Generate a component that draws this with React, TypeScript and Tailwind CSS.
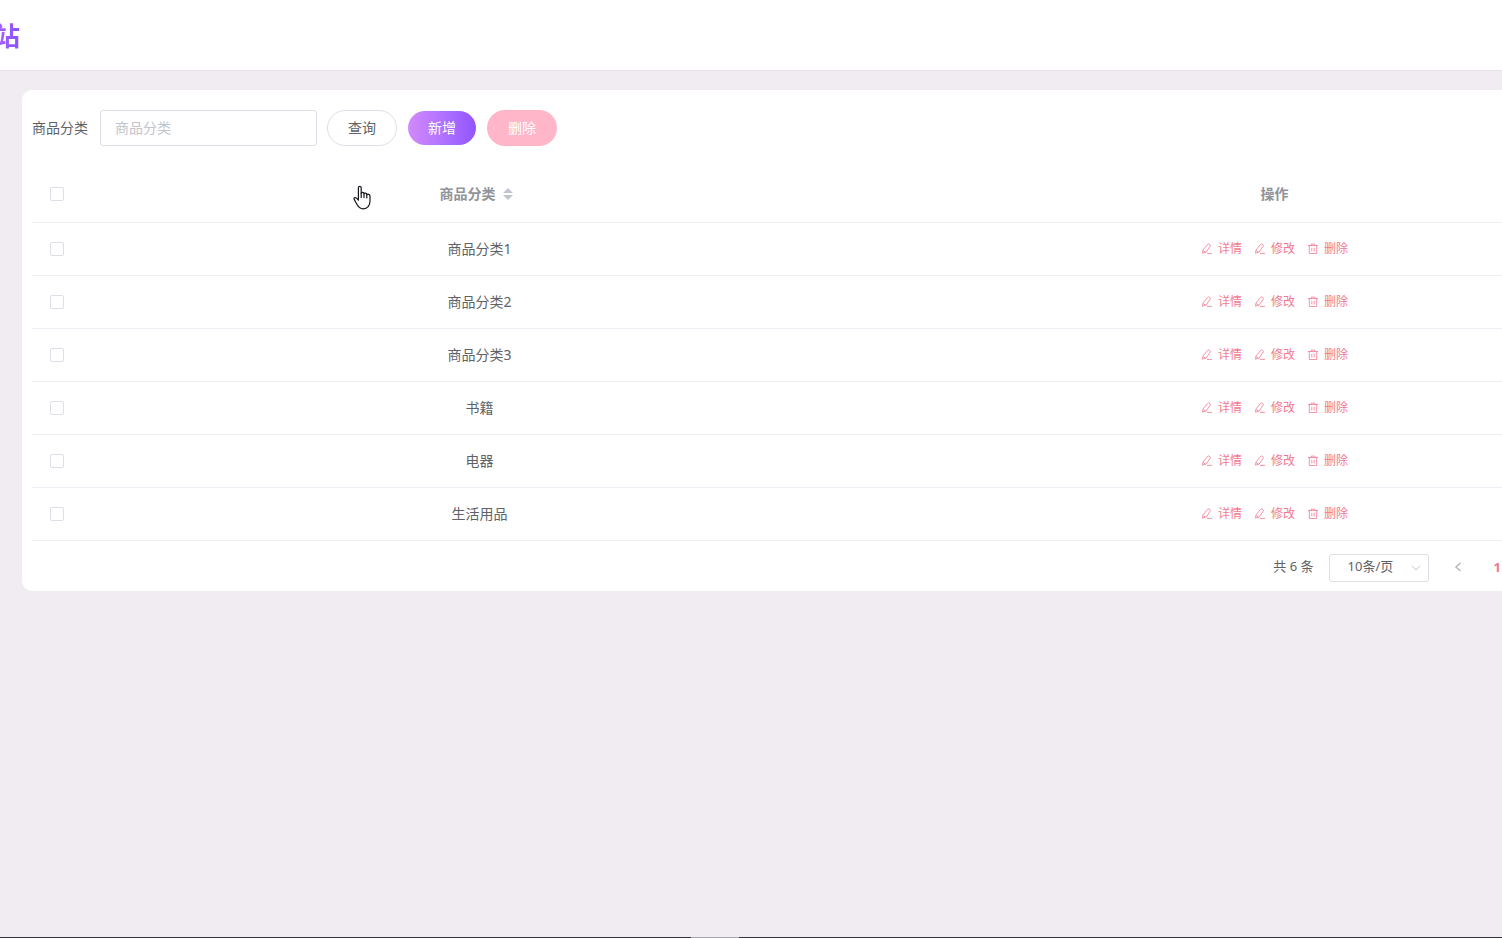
const rows = ['商品分类1', '商品分类2', '商品分类3', '书籍', '电器', '生活用品'];

const checkboxClass =
  'block size-[14px] mx-auto appearance-none rounded-[2px] border border-[#dcdfe6] bg-white checked:bg-[#f78ca0]';

function EditIcon() {
  return (
    <svg viewBox="0 0 12 12" className="size-3" fill="none" stroke="currentColor" strokeWidth="0.8" strokeLinejoin="round" aria-hidden="true">
      <path d="M6.6 1.4Q7.2.6 8 1.1L9 1.7Q9.8 2.2 9.3 3L5.2 9 1.5 10.2 2 6.9Z" />
      <path d="M2.2 7.6 4.4 9.1M6 10.4H11" />
    </svg>
  );
}

function TrashIcon() {
  return (
    <svg viewBox="0 0 12 12" className="size-3" fill="none" stroke="currentColor" strokeWidth="0.8" aria-hidden="true">
      <path d="M1 2.5H11M4.2 2.5V1.1H7.8V2.5M2.3 2.5V10.5H9.7V2.5M4.8 4.8V8.4M7.2 4.8V8.4" />
    </svg>
  );
}

function Action({ label, trash = false }: { label: string; trash?: boolean }) {
  return (
    <button type="button" className="flex items-center gap-[5px] text-xs leading-4 text-[#f2798f]">
      {trash ? <TrashIcon /> : <EditIcon />}
      <span>{label}</span>
    </button>
  );
}

function HandPointer() {
  return (
    <svg viewBox="0 0 18 25" className="pointer-events-none absolute left-[353px] top-[185px] h-[25px] w-[18px]" fill="white" stroke="#17171f" strokeWidth="1.2" strokeLinejoin="round" strokeLinecap="round" aria-hidden="true">
      <path d="M5.4 14.2V2.8C5.4 1 8.2 1 8.2 2.8V8.4C8.4 6.9 11 7 11 8.8 11.4 7.6 13.8 7.8 13.8 9.8 14.4 8.8 17 9 17 11.2V16C17 20.6 14.4 23.8 10.4 23.8 6.6 23.8 4.9 21.5 3.3 18.2L1.2 14.4C.4 12.9 2.2 11.9 3.4 13.1L5.4 15.2" />
      <path d="M8.2 8.4V12.4M11 8.8V12.6M13.8 9.8V13" fill="none" />
    </svg>
  );
}

export default function App() {
  return (
    <div className="relative flex h-screen flex-col overflow-hidden bg-[#f0ecf2] text-sm text-[#606266] [font-family:'Noto_Sans','Noto_Sans_CJK_SC',sans-serif]">
      <header className="flex h-[71px] shrink-0 items-center border-b border-[#e6e1e8] bg-white pt-[2px]">
        <h1 className="-ml-[6px] bg-linear-to-r from-[#a862ff] to-[#8b52ff] bg-clip-text text-[26px] leading-10 font-bold text-transparent">
          站
        </h1>
      </header>

      <main className="min-h-0 flex-1 pt-[19px] pl-[22px]">
        <section className="w-full min-w-[1660px] rounded-[10px] bg-white px-[10px] pt-5 pb-[9px]">
          <form className="flex h-9 items-center" onSubmit={(e) => e.preventDefault()}>
            <label htmlFor="category" className="mr-3">商品分类</label>
            <input
              id="category"
              placeholder="商品分类"
              className="mr-[10px] h-9 w-[217px] rounded-[3px] border border-[#dcdfe6] px-[14px] pb-[2px] outline-none placeholder:text-[#c0c4cc]"
            />
            <div className="flex items-center gap-[11px]">
              <button type="submit" className="h-9 w-[70px] rounded-full border border-[#dcdfe6] bg-white">查询</button>
              <button type="button" className="h-[34px] w-[68px] rounded-full bg-linear-to-r from-[#d28afc] to-[#9255ff] text-white">新增</button>
              <button type="button" className="h-9 w-[70px] rounded-full bg-[#ffb6c8] text-white">删除</button>
            </div>
          </form>

          <table className="mt-[21px] w-full table-fixed border-collapse text-center">
            <colgroup>
              <col className="w-[50px]" />
              <col />
              <col />
            </colgroup>
            <thead className="text-[#909399]">
              <tr className="h-[55px] border-b border-[#eeeff4]">
                <th className="p-0"><input type="checkbox" aria-label="全选" className={checkboxClass} /></th>
                <th className="p-0 font-bold">
                  <button type="button" className="inline-flex items-center font-bold">
                    商品分类
                    <span className="flex w-6 justify-center">
                      <svg viewBox="0 0 10 12" className="h-3 w-[10px]" fill="#c0c4cc" aria-hidden="true">
                        <path d="M0 5 5 0 10 5ZM0 7H10L5 12Z" />
                      </svg>
                    </span>
                  </button>
                </th>
                <th className="p-0 font-bold">操作</th>
              </tr>
            </thead>
            <tbody>
              {rows.map((name) => (
                <tr key={name} className="h-[53px] border-b border-[#eeeff4]">
                  <td className="p-0"><input type="checkbox" aria-label={name} className={checkboxClass} /></td>
                  <td className="p-0">{name}</td>
                  <td className="p-0">
                    <div className="flex justify-center gap-3">
                      <Action label="详情" />
                      <Action label="修改" />
                      <Action label="删除" trash />
                    </div>
                  </td>
                </tr>
              ))}
            </tbody>
          </table>

          <nav className="mt-[13px] flex h-7 items-center justify-end pr-[171px] text-[13px]" aria-label="分页">
            <span className="mr-[15px] pb-[2px]">共 6 条</span>
            <div className="relative">
              <select aria-label="每页条数" className="block h-7 w-[100px] appearance-none rounded-[3px] border border-[#dcdfe6] bg-white pb-[2px] pl-[18px] text-[13px] outline-none">
                <option>10条/页</option>
              </select>
              <svg viewBox="0 0 10 6" className="pointer-events-none absolute top-[11px] right-2 h-[6px] w-[10px]" fill="none" stroke="#c0c4cc" aria-hidden="true">
                <path d="M1 .8 5 5 9 .8" />
              </svg>
            </div>
            <button type="button" aria-label="上一页" className="ml-[14px] flex h-7 w-[30px] items-center justify-center pb-[2px] text-[#b4b7bf]">
              <svg viewBox="0 0 8 10" className="h-[10px] w-2" fill="none" stroke="currentColor" strokeWidth="1.5" aria-hidden="true">
                <path d="M6.5 1 2 5 6.5 9" />
              </svg>
            </button>
            <button type="button" className="ml-[21px] font-bold text-[#f2798f]">1</button>
          </nav>
        </section>
      </main>

      <footer className="flex h-px shrink-0 bg-[#343238]">
        <span className="ml-[46%] h-px w-12 bg-[#aaa6ae]" />
      </footer>
      <HandPointer />
    </div>
  );
}
